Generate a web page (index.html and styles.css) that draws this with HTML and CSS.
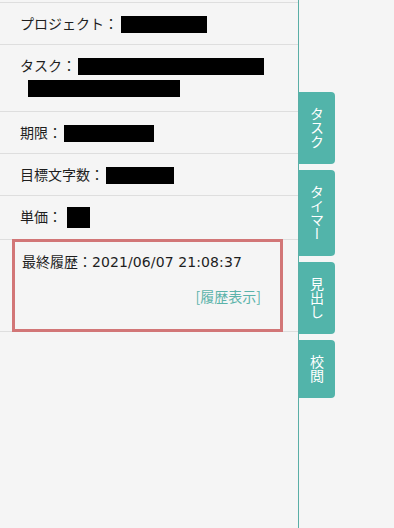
FILE: index.html
```html
<!DOCTYPE html>
<html>
<head>
    <meta charset="utf-8">
    <link rel="stylesheet" href="styles.css">
</head>
<body>
    <div class="layout">
        <div class="panel">
            <div class="row">
                <span class="label">プロジェクト：</span><span class="mask mask-project"></span>
            </div>
            <div class="row row-task">
                <span class="label">タスク：</span><span class="mask mask-task1"></span>
                <span class="mask mask-task2"></span>
            </div>
            <div class="row">
                <span class="label">期限：</span><span class="mask mask-limit"></span>
            </div>
            <div class="row">
                <span class="label">目標文字数：</span><span class="mask mask-chars"></span>
            </div>
            <div class="row">
                <span class="label">単価：</span><span class="mask mask-price"></span>
            </div>
            <div class="history-row">
                <div class="history">
                    <div class="history-text"><span class="label">最終履歴：</span><span class="date">2021/06/07 21:08:37</span></div>
                    <div class="history-link"><a href="#">[履歴表示]</a></div>
                </div>
            </div>
        </div>

        <div class="tabs">
            <div class="tab">タスク</div>
            <div class="tab">タイマー</div>
            <div class="tab">見出し</div>
            <div class="tab">校閲</div>
        </div>
    </div>
</body>
</html>
```

FILE: styles.css
```css
body {
    margin: 0;
    background: #f5f5f5;
    font-family: "Noto Sans CJK JP", "Noto Sans", sans-serif;
    font-size: 14px;
    color: #1e1e1e;
}

.layout {
    display: flex;
    min-height: 528px;
}

.panel {
    width: 299px;
    box-sizing: border-box;
    border-right: 1px solid #5aaea6;
    padding-top: 2px;
}

.row {
    padding: 11px 20px 11px 20px;
    line-height: 19px;
    border-top: 1px solid #dedede;
}

.row-task {
    padding-bottom: 14px;
}

.mask {
    display: inline-block;
    background: #000;
    height: 17px;
    vertical-align: middle;
    margin-top: -2px;
    margin-left: 3px;
}

.mask-project { width: 86px; }
.mask-task1 { width: 186px; margin-left: 2px; }
.mask-task2 { display: block; width: 152px; margin: 5px 0 0 8px; }
.mask-limit { width: 90px; margin-left: 2px; }
.mask-chars { width: 68px; margin-left: 2px; }
.mask-price { width: 23px; height: 21px; margin-left: 5px; }

.history-row {
    border-top: 1px solid #dedede;
    border-bottom: 1px solid #dedede;
    padding: 0 15px 0 12px;
}

.history {
    border: 3px solid #d27677;
    margin-top: -1px;
    margin-bottom: -1px;
    padding: 9px 19px 20px 7px;
    height: 58px;
}

.history-text {
    line-height: 20px;
}

.date {
    font-family: "DejaVu Sans", "Noto Sans", sans-serif;
    letter-spacing: 0.1px;
}

.history-link {
    text-align: right;
    margin-top: 14px;
    line-height: 20px;
}

.history-link a {
    color: #5bb3aa;
    text-decoration: none;
}

.tabs {
    display: flex;
    flex-direction: column;
    gap: 6px;
    padding-top: 92px;
}

.tab {
    width: 36px;
    box-sizing: border-box;
    background: #52b4aa;
    color: #fff;
    border-radius: 0 4px 4px 0;
    writing-mode: vertical-rl;
    text-orientation: upright;
    padding: 15px 0 15px 0;
    line-height: 36px;
    font-size: 14px;
}
```
